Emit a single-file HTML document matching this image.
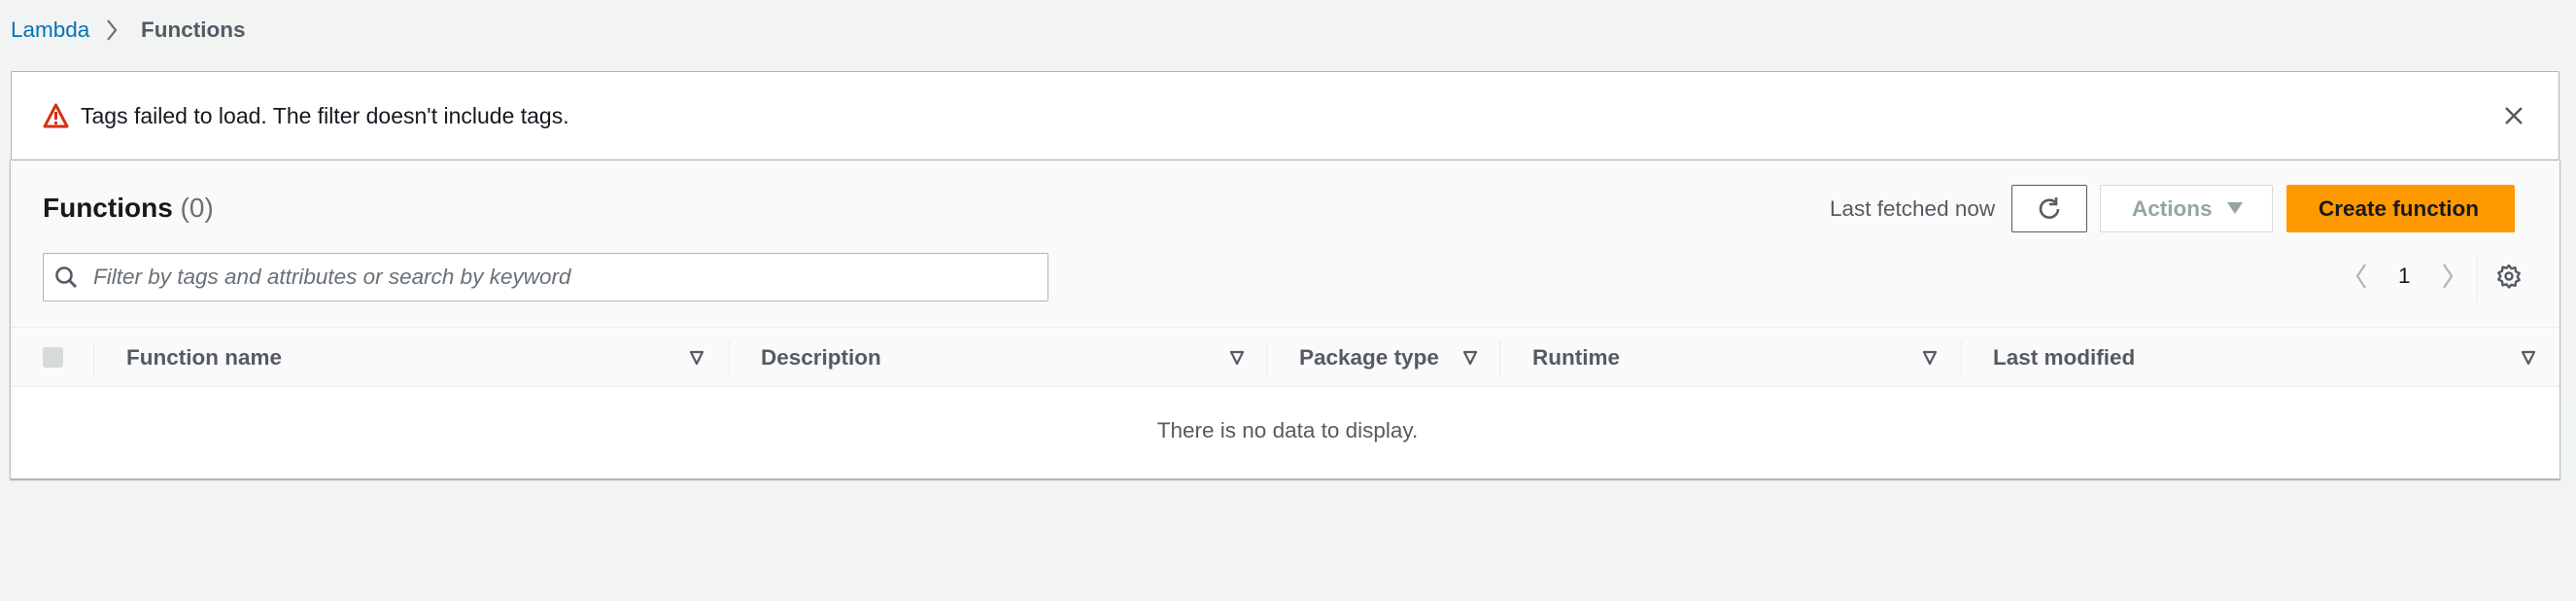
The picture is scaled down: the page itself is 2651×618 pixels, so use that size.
<!DOCTYPE html>
<html><head><meta charset="utf-8"><style>
*{box-sizing:border-box;margin:0;padding:0}
body{width:2651px;height:618px;background:#f2f3f3;font-family:"Liberation Sans",sans-serif;color:#16191f;position:relative;overflow:hidden}
.a{position:absolute}
.t{position:absolute;white-space:nowrap;line-height:1}
.hd{font-size:22.5px;font-weight:bold;color:#545b64;top:357px}
.sep{position:absolute;top:350px;width:1px;height:36px;background:#e9ebed}
.sort{position:absolute;top:360px;width:16px;height:16px}
</style></head><body>
<div class="t" style="left:11px;top:20px;font-size:22.5px;color:#0073bb">Lambda</div>
<svg class="a" style="left:108px;top:18px" width="14" height="26" viewBox="0 0 14 26"><path d="M3 3 L11 13 L3 23" stroke="#687078" stroke-width="2.2" fill="none"/></svg>
<div class="t" style="left:145px;top:20px;font-size:22.5px;color:#545b64;font-weight:bold">Functions</div>

<div class="a" style="left:11px;top:73px;width:2623px;height:92px;background:#fff;border:1px solid #aab7b8;border-radius:2px"></div>
<svg class="a" style="left:44px;top:106px" width="27" height="26" viewBox="0 0 27 26"><path d="M13.5 2 L25 24 L2 24 Z" fill="none" stroke="#d13212" stroke-width="3" stroke-linejoin="round"/><rect x="12" y="9" width="3" height="8" fill="#d13212"/><rect x="12" y="19" width="3" height="3" fill="#d13212"/></svg>
<div class="t" style="left:83px;top:108px;font-size:23px">Tags failed to load. The filter doesn't include tags.</div>
<svg class="a" style="left:2576px;top:108px" width="22" height="22" viewBox="0 0 22 22"><path d="M3 3L19 19M19 3L3 19" stroke="#545b64" stroke-width="2.5"/></svg>

<div class="a" style="left:11px;top:165px;width:2623px;height:327px;background:#fff;box-shadow:0 1px 1px 1px rgba(0,28,36,.3);"></div>
<div class="a" style="left:11px;top:165px;width:2623px;height:233px;background:#fafafa;border-bottom:1px solid #eaeded"></div>
<div class="a" style="left:11px;top:336px;width:2623px;height:1px;background:#eaeded"></div>
<div class="t" style="left:44px;top:200px;font-size:28px;font-weight:bold">Functions <span style="font-weight:normal;color:#687078">(0)</span></div>

<div class="t" style="left:1883px;top:204px;font-size:22.5px;color:#545b64">Last fetched now</div>
<div class="a" style="left:2070px;top:190px;width:78px;height:49px;border:1px solid #545b64;border-radius:2px;background:#fff"></div>
<svg class="a" style="left:2096px;top:201px" width="26" height="28" viewBox="0 0 26 28"><path d="M19 7 A9 9 0 1 0 22 14" fill="none" stroke="#545b64" stroke-width="2.6"/><path d="M20 2 V9 H13" fill="none" stroke="#545b64" stroke-width="2.6"/></svg>
<div class="a" style="left:2161px;top:190px;width:178px;height:49px;border:1px solid #d5dbdb;border-radius:2px;background:#fff"></div>
<div class="t" style="left:2194px;top:204px;font-size:22.5px;font-weight:bold;color:#95a5a6">Actions</div>
<svg class="a" style="left:2291px;top:207px" width="18" height="14"><path d="M1 1H17L9 13Z" fill="#95a5a6"/></svg>
<div class="a" style="left:2353px;top:190px;width:235px;height:49px;background:#ff9900;border-radius:2px"></div>
<div class="t" style="left:2386px;top:204px;font-size:22.5px;font-weight:bold">Create function</div>

<div class="a" style="left:44px;top:260px;width:1035px;height:50px;background:#fff;border:1px solid #aab7b8;border-radius:2px"></div>
<svg class="a" style="left:56px;top:273px" width="24" height="24" viewBox="0 0 24 24"><circle cx="10" cy="10" r="7.5" fill="none" stroke="#545b64" stroke-width="2.6"/><path d="M15.5 15.5L22 22" stroke="#545b64" stroke-width="2.8"/></svg>
<div class="t" style="left:96px;top:274px;font-size:22.5px;font-style:italic;color:#687078">Filter by tags and attributes or search by keyword</div>

<svg class="a" style="left:2422px;top:270px" width="16" height="28"><path d="M12 2L4 14L12 26" stroke="#aab7b8" stroke-width="2.2" fill="none"/></svg>
<div class="t" style="left:2468px;top:273px;font-size:22.5px">1</div>
<svg class="a" style="left:2511px;top:270px" width="16" height="28"><path d="M4 2L12 14L4 26" stroke="#aab7b8" stroke-width="2.2" fill="none"/></svg>
<div class="a" style="left:2549px;top:260px;width:1px;height:50px;background:#eaeded"></div>
<svg class="a" style="left:2569px;top:271px" width="26" height="26" viewBox="0 0 26 26"><path d="M13 2l2.5 3.2 4-1 .5 4 3.7 1.8-2 3.5 2 3.5-3.7 1.8-.5 4-4-1L13 24.5l-2.5-3.2-4 1-.5-4L2.3 16.5l2-3.5-2-3.5L6 7.7l.5-4 4 1Z" fill="none" stroke="#545b64" stroke-width="2.4" stroke-linejoin="round"/><circle cx="13" cy="13" r="3.5" fill="none" stroke="#545b64" stroke-width="2.4"/></svg>

<div class="a" style="left:44px;top:357px;width:21px;height:21px;background:#d5dbdb;border-radius:3px"></div>
<div class="sep" style="left:96px"></div>
<div class="t hd" style="left:130px">Function name</div>
<svg class="sort" style="left:709px"><path d="M2 2H14L8 14Z" fill="none" stroke="#545b64" stroke-width="2.2" stroke-linejoin="round"/></svg>
<div class="sep" style="left:750px"></div>
<div class="t hd" style="left:783px">Description</div>
<svg class="sort" style="left:1265px"><path d="M2 2H14L8 14Z" fill="none" stroke="#545b64" stroke-width="2.2" stroke-linejoin="round"/></svg>
<div class="sep" style="left:1303px"></div>
<div class="t hd" style="left:1337px">Package type</div>
<svg class="sort" style="left:1505px"><path d="M2 2H14L8 14Z" fill="none" stroke="#545b64" stroke-width="2.2" stroke-linejoin="round"/></svg>
<div class="sep" style="left:1543px"></div>
<div class="t hd" style="left:1577px">Runtime</div>
<svg class="sort" style="left:1978px"><path d="M2 2H14L8 14Z" fill="none" stroke="#545b64" stroke-width="2.2" stroke-linejoin="round"/></svg>
<div class="sep" style="left:2018px"></div>
<div class="t hd" style="left:2051px">Last modified</div>
<svg class="sort" style="left:2594px"><path d="M2 2H14L8 14Z" fill="none" stroke="#545b64" stroke-width="2.2" stroke-linejoin="round"/></svg>

<div class="t" style="left:1325px;top:432px;font-size:22.5px;color:#545b64;transform:translateX(-50%)">There is no data to display.</div>
</body></html>
